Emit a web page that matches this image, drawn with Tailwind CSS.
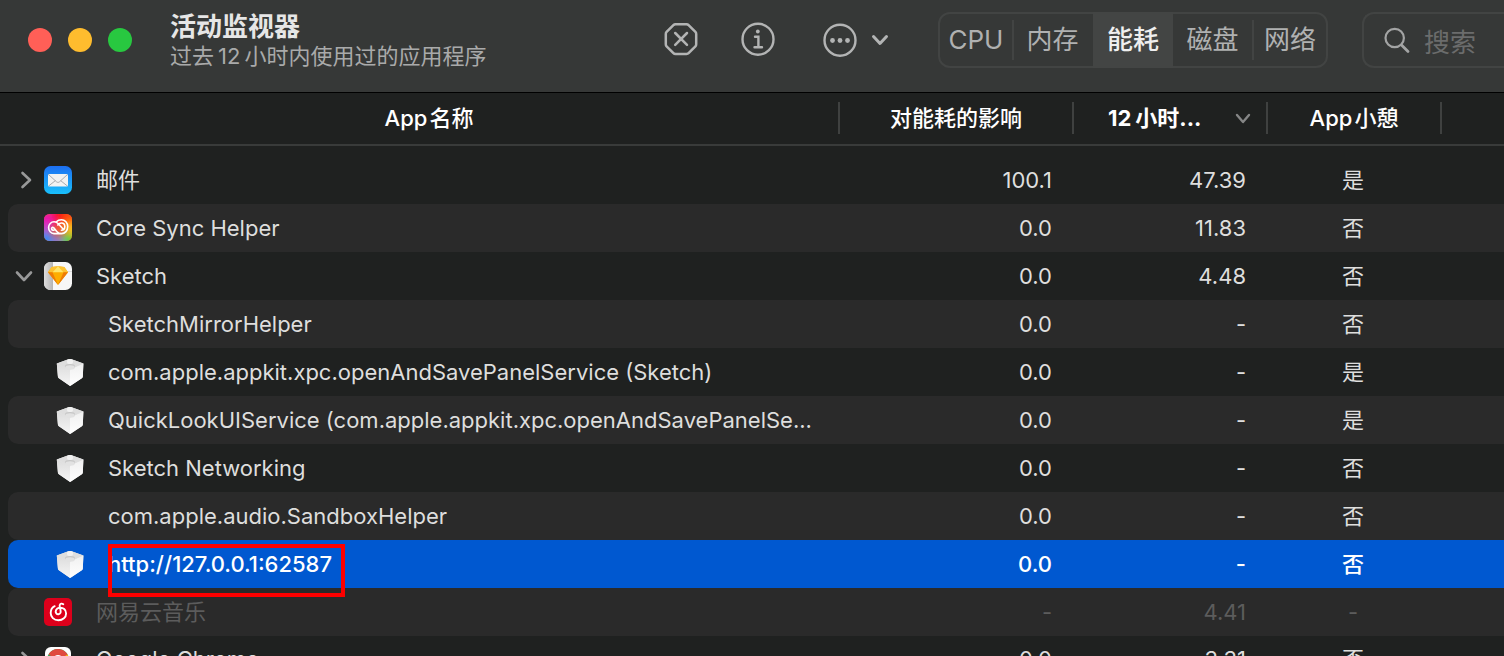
<!DOCTYPE html>
<html lang="zh-CN">
<head>
<meta charset="utf-8">
<title>活动监视器</title>
<script src="https://cdn.jsdelivr.net/npm/@tailwindcss/browser@4"></script>
</head>
<body class="h-screen overflow-hidden bg-[#1f2120] font-['Inter','Noto_Sans_CJK_SC',sans-serif] text-[22px] leading-7 text-[#dededd]">

<!-- Shared symbols -->
<svg class="absolute size-0" aria-hidden="true">
  <defs>
    <linearGradient id="cubeL" x1="0" y1="0" x2="0" y2="1"><stop offset="0" stop-color="#dcdcdc"/><stop offset="1" stop-color="#f6f6f6"/></linearGradient>
    <linearGradient id="cubeR" x1="0" y1="0" x2="0" y2="1"><stop offset="0" stop-color="#f0f0f0"/><stop offset="1" stop-color="#ffffff"/></linearGradient>
    <linearGradient id="mailBg" x1="0" y1="0" x2="0" y2="1"><stop offset="0" stop-color="#1d6ff2"/><stop offset="1" stop-color="#19c0fb"/></linearGradient>
    <linearGradient id="skBg" x1="0" y1="0" x2="1" y2="0"><stop offset="0" stop-color="#dedede"/><stop offset="1" stop-color="#b4b4b4"/></linearGradient>
  </defs>
  <symbol id="cube" viewBox="0 0 28 28">
    <path d="M.8 5.600 11 1.800c2-.8 4-.8 6 0l10.400 3.800-.6 13c0 .8-.4 1.300-1 1.700L15 27.600c-.5.300-1 .3-1.500 0L2.900 20.300c-.6-.4-1-.9-1-1.700z" fill="#e6e6e6"/>
    <path d="M.8 5.600 14 11.500v16.400L2.900 20.300c-.6-.4-1-.9-1-1.700z" fill="url(#cubeL)"/>
    <path d="M27.400 5.600 14 11.500v16.400l11.800-7.600c.6-.4 1-.9 1-1.700z" fill="url(#cubeR)"/>
    <path d="M.8 5.600 11 1.800c2-.8 4-.8 6 0l10.400 3.800L14 11.500z" fill="#dedede"/>
    <ellipse cx="14" cy="8.400" rx="5" ry="2.400" fill="#c6c6c6"/>
    <ellipse cx="14" cy="9.500" rx="4.800" ry="2.200" fill="#e2e2e2"/>
    <rect x="11" y="1" width="6" height="5" rx="2" fill="#f1f1f1"/>
  </symbol>
</svg>

<header class="flex h-[93px] items-start overflow-hidden border-b border-black bg-[#363837] pl-7 font-normal">
  <div class="flex shrink-0 gap-4 pt-7">
    <button type="button" aria-label="关闭" class="size-6 rounded-full bg-[#ff5f57]"></button>
    <button type="button" aria-label="最小化" class="size-6 rounded-full bg-[#febc2e]"></button>
    <button type="button" aria-label="缩放" class="size-6 rounded-full bg-[#28c840]"></button>
  </div>
  <div class="ml-[38px] min-w-0 flex-1 pt-3">
    <h1 class="text-[26px] font-bold leading-[30px] text-[#e6e6e6]">活动监视器</h1>
    <p class="whitespace-nowrap leading-7 text-[#a9aaaa]">过去<span class="mx-1">12</span>小时内使用过的应用程序</p>
  </div>
  <div class="flex shrink-0 items-center pt-[22px] text-[#b3b4b4]">
    <button type="button" aria-label="停止" class="size-9">
      <svg viewBox="0 0 36 36" class="size-9" fill="none" stroke="currentColor" stroke-width="2.500" stroke-linejoin="round" stroke-linecap="round"><path d="M13 2.300h10.500c.9 0 1.500.2 2.100.8l6.800 6.700c.6.600.8 1.200.8 2.100v10.400c0 .9-.2 1.500-.8 2.100l-6.800 6.700c-.6.600-1.200.8-2.100.8H12.500c-.9 0-1.500-.2-2.100-.8l-6.800-6.700c-.6-.6-.8-1.200-.8-2.100V11.900c0-.9.200-1.500.8-2.100l6.800-6.700c.6-.6 1.200-.8 2.100-.8z"/><path d="m12.200 11 11.800 11.800M24 11 12.200 22.800"/></svg>
    </button>
    <button type="button" aria-label="简介" class="ml-[41px] size-9">
      <svg viewBox="0 0 36 36" class="size-9" fill="none" stroke="currentColor" stroke-width="2.400" stroke-linecap="round"><circle cx="18" cy="17.200" r="15.500"/><path d="M15 14.800h3.400v10.300M14.500 25.200h7.500"/><circle cx="17.800" cy="9.500" r="1.900" fill="currentColor" stroke="none"/></svg>
    </button>
    <button type="button" aria-label="更多" class="ml-[46px] flex items-center">
      <svg viewBox="0 0 36 36" class="size-9" fill="none" stroke="currentColor" stroke-width="2.400"><circle cx="18" cy="18.200" r="15.500"/><g fill="currentColor" stroke="none"><circle cx="10.500" cy="18.500" r="2.400"/><circle cx="18" cy="18.500" r="2.400"/><circle cx="25.500" cy="18.500" r="2.400"/></g></svg>
      <svg viewBox="0 0 18 12" class="ml-[13px] h-3 w-[18px]" fill="none" stroke="currentColor" stroke-width="3" stroke-linecap="round" stroke-linejoin="round"><path d="m2.500 2.500 6.500 7 6.500-7"/></svg>
    </button>
  </div>
  <nav aria-label="视图" class="ml-[49px] mt-3 flex h-14 w-[390px] shrink-0 items-center rounded-xl border-2 border-[#424443] pb-px text-[26px] leading-10 text-[#b0b1b1]">
    <button type="button" class="w-[72px] whitespace-nowrap text-center">CPU</button>
    <span class="h-10 w-0.5 bg-[#424443]"></span>
    <button type="button" class="w-[79px] whitespace-nowrap pr-0.5">内存</button>
    <button type="button" aria-pressed="true" class="-my-0.5 h-14 w-20 shrink-0 bg-[#434544] font-medium text-[#efefef]">能耗</button>
    <button type="button" class="w-[79px] whitespace-nowrap">磁盘</button>
    <span class="h-10 w-0.5 bg-[#424443]"></span>
    <button type="button" class="w-[72px] whitespace-nowrap">网络</button>
  </nav>
  <label class="ml-[34px] mt-3 flex h-14 w-[142px] shrink-0 items-center rounded-l-xl border-2 border-r-0 border-[#424443] pl-5 text-[#a3a4a4]">
    <svg viewBox="0 0 26 28" class="h-7 w-[26px] shrink-0" fill="none" stroke="currentColor" stroke-width="2.200" stroke-linecap="round"><circle cx="10.700" cy="12" r="9.200"/><path d="m17.500 19 6.500 6.500" stroke-width="2.800"/></svg>
    <input type="search" aria-label="搜索" placeholder="搜索" class="ml-3.5 mt-1.5 w-full min-w-0 bg-transparent text-[26px] leading-10 outline-none placeholder:text-[#6b6c6c]">
  </label>
</header>

<main>
  <table class="w-full table-fixed border-separate border-spacing-0">
    <colgroup><col class="w-2"><col><col class="w-[234px]"><col class="w-[194px]"><col class="w-[174px]"><col class="w-[62px]"></colgroup>
    <thead class="text-white">
      <tr class="h-[53px]">
        <th scope="col" colspan="2" class="border-b-2 border-[#393b3a] p-0 pb-0.5"><div class="flex h-8 items-center justify-center border-r-2 border-[#3f4140] pl-5 font-medium"><span>App<span class="ml-0.5">名称</span></span></div></th>
        <th scope="col" class="border-b-2 border-[#393b3a] p-0 pb-0.5"><div class="flex h-8 items-center justify-center border-r-2 border-[#3f4140] font-medium">对能耗的影响</div></th>
        <th scope="col" aria-sort="descending" class="border-b-2 border-[#393b3a] p-0 pb-0.5"><div class="flex h-8 items-center justify-between border-r-2 border-[#3f4140] pl-[34px] pr-[15px] font-bold"><span>12<span class="ml-1">小时...</span></span><svg viewBox="0 0 16 12" class="mt-0.5 h-3 w-4 text-[#858686]" fill="none" stroke="currentColor" stroke-width="2.400" stroke-linecap="round" stroke-linejoin="round"><path d="m2 2 6 7 6-7"/></svg></div></th>
        <th scope="col" class="border-b-2 border-[#393b3a] p-0 pb-0.5"><div class="flex h-8 items-center justify-center border-r-2 border-[#3f4140] font-medium"><span>App<span class="ml-0.5">小憩</span></span></div></th>
        <td class="border-b-2 border-[#393b3a] p-0"></td>
      </tr>
      <tr class="h-2.5" aria-hidden="true"><td colspan="6" class="p-0"></td></tr>
    </thead>
    <tbody>
      <tr class="h-12">
        <td class="p-0"></td>
        <td class="p-0"><div class="flex items-center">
          <button type="button" aria-label="展开" class="ml-2.5 w-4 text-[#989999]"><svg viewBox="0 0 16 18" class="h-[18px] w-4" fill="none" stroke="currentColor" stroke-width="2.600" stroke-linecap="round" stroke-linejoin="round"><path d="m4.500 2 7.500 7-7.500 7"/></svg></button>
          <svg viewBox="0 0 28 28" class="ml-2.5 size-7"><rect width="28" height="28" rx="6.500" fill="url(#mailBg)"/><rect x="4" y="8" width="20" height="12.500" rx="1.500" fill="#f2f2f2"/><path d="m4.600 8.600 7.900 7.200c1 .8 2 .8 3 0l7.900-7.200M4.600 20l6.800-5.400M23.400 20l-6.800-5.400" fill="none" stroke="#a9acb0" stroke-width="1"/></svg>
          <span class="ml-6">邮件</span></div></td>
        <td class="p-0 pr-[22px] text-right">100.1</td><td class="p-0 pr-[22px] text-right">47.39</td><td class="p-0 pr-1 text-center">是</td><td class="p-0"></td>
      </tr>
      <tr class="h-12">
        <td class="p-0"></td>
        <td class="rounded-l-[10px] bg-[#2a2a2a] p-0"><div class="flex items-center">
          <svg viewBox="0 0 28 28" class="ml-9 size-7"><defs><clipPath id="ccClip"><rect width="28" height="27" rx="5.500"/></clipPath><filter id="ccBlur" x="-50%" y="-50%" width="200%" height="200%"><feGaussianBlur stdDeviation="3.500"/></filter></defs><g clip-path="url(#ccClip)"><rect width="28" height="28" fill="#f0562e"/><g filter="url(#ccBlur)"><circle cx="3" cy="6" r="9" fill="#e815b0"/><circle cx="15" cy="1" r="7" fill="#fb0a0a"/><circle cx="26" cy="4" r="7" fill="#fd4a07"/><circle cx="28" cy="15" r="7" fill="#fbc41d"/><circle cx="24" cy="26" r="7" fill="#4fd636"/><circle cx="13" cy="28" r="7" fill="#8f76c9"/><circle cx="1" cy="25" r="8" fill="#2f8df8"/><circle cx="2" cy="15" r="5" fill="#a44be8"/></g></g><path d="M17.500 19.600H10a5.900 5.900 0 0 1-5.400-6c0-3.300 2.400-5.800 5.500-5.800 1.800 0 3 .6 4.200 1.900l5.400 6M12.400 7.800c1.200-1.300 3-2 5-2 3.700 0 6.300 3 6.300 6.800 0 4-2.700 7-6.200 7-2.100 0-3.500-.8-4.700-2.200l-3-3.500c-1.200-1.200-2.200-.3-2.200.5 0 1.200 1 1.900 2.300 1.900M13.800 11c1-1.300 2.200-2 3.600-2 2 0 3.400 1.600 3.400 3.600s-1.400 3.700-3.400 3.700" fill="none" stroke="#fff" stroke-width="1.600" stroke-linecap="round"/></svg>
          <span class="ml-6">Core Sync Helper</span></div></td>
        <td class="bg-[#2a2a2a] p-0 pr-[22px] text-right">0.0</td><td class="bg-[#2a2a2a] p-0 pr-[22px] text-right">11.83</td><td class="bg-[#2a2a2a] p-0 pr-1 text-center">否</td><td class="bg-[#2a2a2a] p-0"></td>
      </tr>
      <tr class="h-12">
        <td class="p-0"></td>
        <td class="p-0"><div class="flex items-center">
          <button type="button" aria-label="折叠" class="ml-[7px] w-[18px] text-[#989999]"><svg viewBox="0 0 18 16" class="h-4 w-[18px]" fill="none" stroke="currentColor" stroke-width="2.600" stroke-linecap="round" stroke-linejoin="round"><path d="m2 4.500 7 7.500 7-7.500"/></svg></button>
          <svg viewBox="0 0 28 28" class="ml-[11px] size-7"><rect width="28" height="28" rx="6.500" fill="#f7f7f7"/><path d="M9 0v28H6.500A6.500 6.500 0 0 1 0 21.500v-15A6.500 6.500 0 0 1 6.500 0z" fill="url(#skBg)"/><path d="M9 9.500h19" stroke="#d4d4d4" stroke-width=".8"/><path d="M14 4.200 20.300 5l3.700 5.200L14 23 4 10.200 7.700 5z" fill="#fdad00"/><path d="M7.700 5 14 4.200 8.500 10.200H4z" fill="#fdc231"/><path d="M20.300 5 14 4.200l5.500 6H24z" fill="#fdc231"/><path d="m14 4.200 5.500 6h-11z" fill="#fee56b"/><path d="M4 10.200h4.500L14 23zM24 10.200h-4.500L14 23z" fill="#ee7c05"/></svg>
          <span class="ml-6">Sketch</span></div></td>
        <td class="p-0 pr-[22px] text-right">0.0</td><td class="p-0 pr-[22px] text-right">4.48</td><td class="p-0 pr-1 text-center">否</td><td class="p-0"></td>
      </tr>
      <tr class="h-12">
        <td class="p-0"></td>
        <td class="rounded-l-[10px] bg-[#2a2a2a] p-0 pl-[100px]">SketchMirrorHelper</td>
        <td class="bg-[#2a2a2a] p-0 pr-[22px] text-right">0.0</td><td class="bg-[#2a2a2a] p-0 pr-[22px] text-right">-</td><td class="bg-[#2a2a2a] p-0 pr-1 text-center">否</td><td class="bg-[#2a2a2a] p-0"></td>
      </tr>
      <tr class="h-12">
        <td class="p-0"></td>
        <td class="p-0 pr-6"><div class="flex items-center pl-12"><svg class="size-7 shrink-0" aria-hidden="true"><use href="#cube"/></svg><span class="ml-6 truncate">com.apple.appkit.xpc.openAndSavePanelService (Sketch)</span></div></td>
        <td class="p-0 pr-[22px] text-right">0.0</td><td class="p-0 pr-[22px] text-right">-</td><td class="p-0 pr-1 text-center">是</td><td class="p-0"></td>
      </tr>
      <tr class="h-12">
        <td class="p-0"></td>
        <td class="rounded-l-[10px] bg-[#2a2a2a] p-0 pr-2"><div class="flex items-center pl-12"><svg class="size-7 shrink-0" aria-hidden="true"><use href="#cube"/></svg><span class="ml-6 whitespace-nowrap">QuickLookUIService (com.apple.appkit.xpc.openAndSavePanelSe...</span></div></td>
        <td class="bg-[#2a2a2a] p-0 pr-[22px] text-right">0.0</td><td class="bg-[#2a2a2a] p-0 pr-[22px] text-right">-</td><td class="bg-[#2a2a2a] p-0 pr-1 text-center">是</td><td class="bg-[#2a2a2a] p-0"></td>
      </tr>
      <tr class="h-12">
        <td class="p-0"></td>
        <td class="p-0"><div class="flex items-center pl-12"><svg class="size-7 shrink-0" aria-hidden="true"><use href="#cube"/></svg><span class="ml-6">Sketch Networking</span></div></td>
        <td class="p-0 pr-[22px] text-right">0.0</td><td class="p-0 pr-[22px] text-right">-</td><td class="p-0 pr-1 text-center">否</td><td class="p-0"></td>
      </tr>
      <tr class="h-12">
        <td class="p-0"></td>
        <td class="rounded-l-[10px] bg-[#2a2a2a] p-0 pl-[100px]">com.apple.audio.SandboxHelper</td>
        <td class="bg-[#2a2a2a] p-0 pr-[22px] text-right">0.0</td><td class="bg-[#2a2a2a] p-0 pr-[22px] text-right">-</td><td class="bg-[#2a2a2a] p-0 pr-1 text-center">否</td><td class="bg-[#2a2a2a] p-0"></td>
      </tr>
      <tr class="h-12 font-medium text-white" aria-selected="true">
        <td class="p-0"></td>
        <td class="rounded-l-[10px] bg-[#0058d0] p-0"><div class="flex items-center pl-12"><svg class="size-7 shrink-0" aria-hidden="true"><use href="#cube"/></svg><span class="relative ml-6">http://127.0.0.1:62587<span class="absolute -top-1.5 left-0 z-10 h-[53px] w-[237px] border-4 border-[#fe0000]"></span></span></div></td>
        <td class="bg-[#0058d0] p-0 pr-[22px] text-right">0.0</td><td class="bg-[#0058d0] p-0 pr-[22px] text-right">-</td><td class="bg-[#0058d0] p-0 pr-1 text-center">否</td><td class="bg-[#0058d0] p-0"></td>
      </tr>
      <tr class="h-12 text-[#5c5c5c]">
        <td class="p-0"></td>
        <td class="rounded-l-[10px] bg-[#2a2a2a] p-0"><div class="flex items-center pl-9"><svg viewBox="0 0 28 28" class="size-7"><rect width="28" height="28" rx="5" fill="#dd001b"/><path d="M19.300 6.200c-1.300-1-3.200-.8-3.600.7-.3 1 .1 2.200.7 4.600.4 1.800.4 2.600 0 3.400-.8 1.500-3 1.800-4.100.4-1.500-1.900-.1-5 3-5.500 4-.6 6.800 2 6.800 5.600 0 3.800-3.200 6.800-7.700 6.800-4.600 0-7.700-3.200-7.700-7.300 0-3 1.600-5.500 4-6.700" fill="none" stroke="#fff" stroke-width="1.900" stroke-linecap="round"/></svg><span class="ml-6">网易云音乐</span></div></td>
        <td class="bg-[#2a2a2a] p-0 pr-[22px] text-right">-</td><td class="bg-[#2a2a2a] p-0 pr-[22px] text-right">4.41</td><td class="bg-[#2a2a2a] p-0 pr-1 text-center">-</td><td class="bg-[#2a2a2a] p-0"></td>
      </tr>
      <tr class="h-12">
        <td class="p-0"></td>
        <td class="p-0"><div class="flex items-center">
          <button type="button" aria-label="展开" class="ml-2.5 w-4 text-[#989999]"><svg viewBox="0 0 16 18" class="h-[18px] w-4" fill="none" stroke="currentColor" stroke-width="2.600" stroke-linecap="round" stroke-linejoin="round"><path d="m4.500 2 7.500 7-7.500 7"/></svg></button>
          <svg viewBox="0 0 28 28" class="ml-2.5 size-7"><rect x="1" y="1" width="26" height="26" rx="6" fill="#fff"/><circle cx="14" cy="14" r="11" fill="#34a853"/><path d="M14 25a11 11 0 0 0 9.500-16.500H14z" fill="#fbbc05"/><path d="M4.500 8.500A11 11 0 0 1 14 3c4 0 7.600 2.200 9.500 5.500L14 14z" fill="#e04a3f"/><circle cx="14" cy="14" r="4.500" fill="#4285f4" stroke="#fff" stroke-width="1.200"/></svg>
          <span class="ml-6 pb-0.5">Google Chrome</span></div></td>
        <td class="p-0 pb-0.5 pr-[22px] text-right">0.0</td><td class="p-0 pb-0.5 pr-[22px] text-right">3.31</td><td class="p-0 pb-0.5 pr-1 text-center">否</td><td class="p-0"></td>
      </tr>
    </tbody>
  </table>
</main>
</body>
</html>
